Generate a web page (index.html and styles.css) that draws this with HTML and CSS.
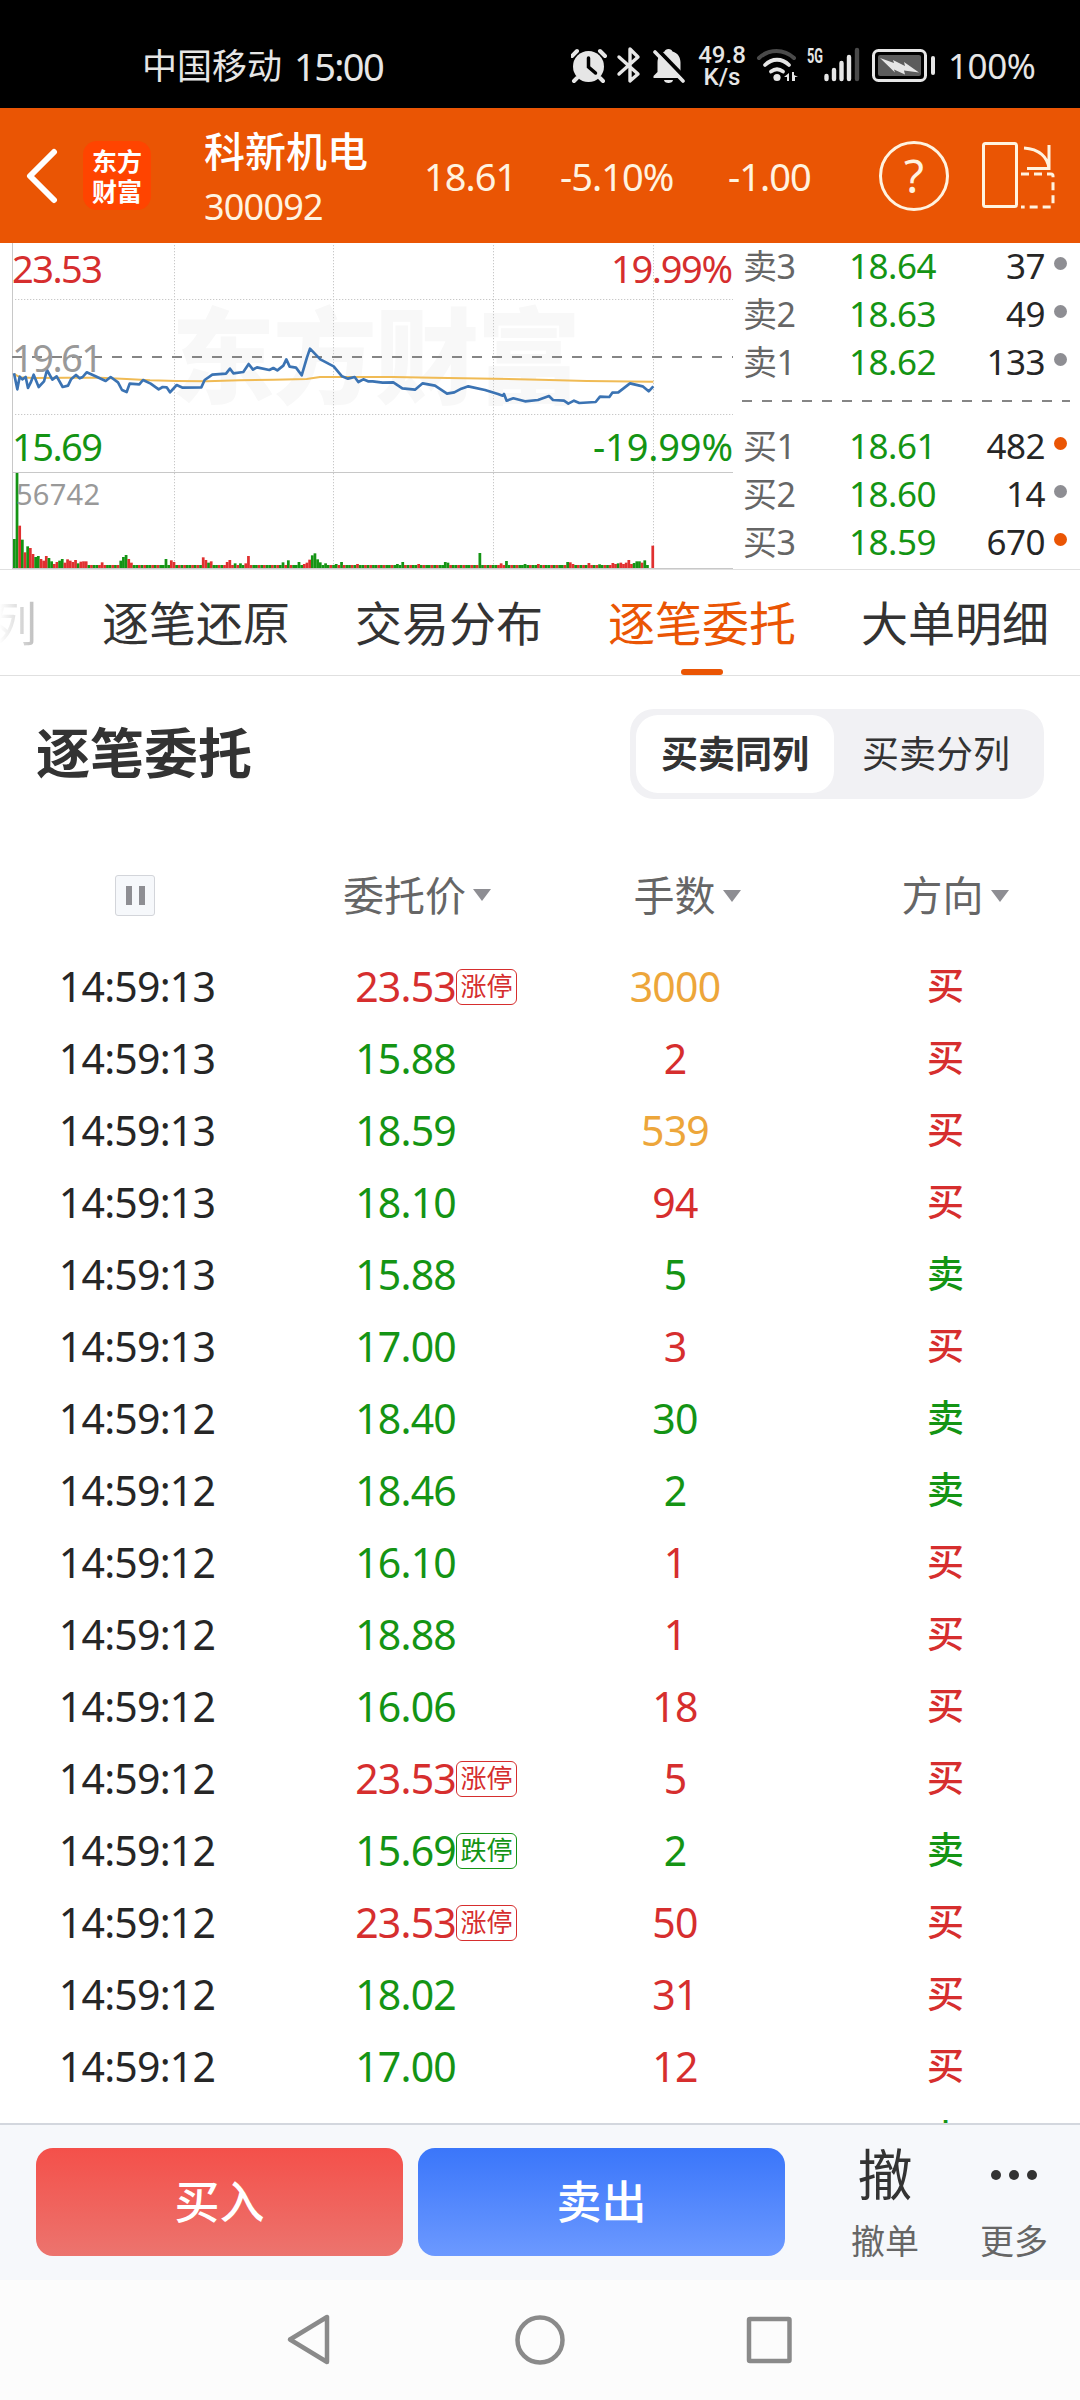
FILE: index.html
```html
<!DOCTYPE html>
<html lang="zh-CN">
<head>
    <meta charset="UTF-8">
    <meta name="viewport" content="width=device-width, initial-scale=1.0">
    <title>科新机电 300092</title>
    <link rel="stylesheet" href="styles.css">
</head>
<body>
    <div class="status-bar">
        <span class="carrier">中国移动</span>
        <span class="clock">15:00</span>
        <svg class="status-icons" width="114" height="40" viewBox="571 46 114 40">
            <!-- 闹钟 -->
            <circle cx="588.500" cy="66.500" r="15.500" fill="#e6e6e6"/>
            <path d="M572 56l5-5M605 56l-5-5M577 78l-3 3M600 78l3 3" stroke="#e6e6e6" stroke-width="4" stroke-linecap="round"/>
            <path d="M588.500 58v9l7 6" stroke="#000" stroke-width="3.500" fill="none" stroke-linecap="round"/>
            <!-- 蓝牙 -->
            <path d="M619 57l19 17-8 7V49l8 8-19 17" stroke="#e6e6e6" stroke-width="3.400" fill="none" stroke-linejoin="round" stroke-linecap="round"/>
            <!-- 静音 -->
            <path d="M668.500 49c2 0 3.500 1 4 2.500 5.500 1.500 8 6 8 11V72l3 4v2h-30v-2l4-4v-9.500c0-5 2.500-9.500 7-11 .5-1.500 2-2.500 4-2.500zM664 80h9c0 4-9 4-9 0z" fill="#e6e6e6"/>
            <path d="M656 48l30 31" stroke="#000" stroke-width="4"/>
            <path d="M655 52l28 29" stroke="#e6e6e6" stroke-width="3.600" stroke-linecap="round"/>
        </svg>
        <div class="speed"><span>49.8</span><span>K/s</span></div>
        <svg class="signal" width="105" height="40" viewBox="756 46 105 40">
            <path d="M759 58c10-9.500 25-9.500 35 0" stroke="#4a4a4a" stroke-width="4" fill="none" stroke-linecap="round"/>
            <path d="M765 65c7-7 17-7 24 0M771 71.500c4-3 8-3 12 0" stroke="#e6e6e6" stroke-width="3.800" fill="none" stroke-linecap="round"/>
            <circle cx="777" cy="77.500" r="3.600" fill="#e6e6e6"/>
            <path d="M784 77l5-4v8h-2v-4zM798 77h-3v4h-3v-9h2v3z" fill="#e6e6e6"/>
            <text class="net" x="807" y="63" textLength="16" lengthAdjust="spacingAndGlyphs">5G</text>
            <path d="M826.500 76v3M834 70v9M841.500 63v16M849 57v22" stroke="#e6e6e6" stroke-width="4.400" stroke-linecap="round"/>
            <path d="M857 50v29" stroke="#4a4a4a" stroke-width="4.400" stroke-linecap="round"/>
        </svg>
        <svg class="battery" width="64" height="34" viewBox="872 49 64 34">
            <rect x="873.500" y="50.500" width="52" height="30" rx="5" fill="none" stroke="#e6e6e6" stroke-width="3"/>
            <rect x="878" y="55" width="43" height="21" rx="2" fill="#5c5c5c"/>
            <path d="M880 58l14 5-1-3 12 6-1-4 15 10.500-15-2 1 4-11-5 1 3z" fill="#e6e6e6"/>
            <path d="M933 58v15" stroke="#e6e6e6" stroke-width="4" stroke-linecap="round"/>
        </svg>
        <span class="percent">100%</span>
    </div>

    <div class="header">
        <svg class="back" width="34" height="56" viewBox="0 0 34 56"><path d="M29 4L5 28l24 24" fill="none" stroke="#fff" stroke-width="6" stroke-linecap="round" stroke-linejoin="round"/></svg>
        <div class="logo"><span>东方</span><span>财富</span></div>
        <div class="stock">
            <h1>科新机电</h1>
            <span>300092</span>
        </div>
        <span class="quote price-now">18.61</span>
        <span class="quote rate">-5.10%</span>
        <span class="quote change">-1.00</span>
        <div class="help">?</div>
        <svg class="rotate" width="74" height="70" viewBox="981 141 74 70" fill="none" stroke="#fff3e0" stroke-width="3">
            <rect x="983.500" y="143.500" width="33" height="63" rx="2"/>
            <path d="M1024 148c15 1 24 9 25 21M1049 145v23.500h-22"/>
            <path d="M1021 174h30q2 0 2 2v29q0 2-2 2h-30" stroke-dasharray="8 5"/>
        </svg>
    </div>

    <div class="market">
        <svg class="chart" width="735" height="326" viewBox="0 243 735 326">
            <text class="watermark" x="171" y="396" textLength="410">东方财富</text>
            <g stroke="#c8c8c8" stroke-dasharray="1.300 1.700">
                <path d="M174.500 245v323M333.500 245v323M493.500 245v323M653.500 245v323M15 299.500h718M15 414.500h718"/>
            </g>
            <path d="M12.500 243v326M12 472.500h721M12 568.500h721" stroke="#c8c8c8" fill="none"/>
            <path d="M12 357h721" stroke="#858585" stroke-width="2" stroke-dasharray="10 10"/>
            <g transform="translate(0 240) scale(.33333)" fill="none" stroke-linejoin="round">
                <polyline class="avg" points="42,402 60,412 100,414 200,413 300,413 380,417 450,421 530,423 620,424 720,421 820,419 920,417 960,411 1080,411 1180,411 1300,413 1480,416 1620,419 1760,423 1960,425"/>
                <polyline class="line" points="42,400 52,448 59,410 67,418 77,411 84,444 92,428 101,404 116,441 132,424 141,390 157,419 170,409 188,441 204,437 213,418 228,405 239,415 248,411 260,397 285,408 317,423 332,411 354,427 366,450 380,456 389,431 418,433 429,420 452,431 476,448 488,441 500,442 510,457 530,435 548,443 604,442 614,420 637,404 678,401 690,386 700,400 730,396 746,372 759,389 771,382 808,390 820,384 832,391 850,377 859,358 869,380 888,383 905,406 921,352 930,326 961,358 1001,379 1026,409 1044,416 1064,411 1075,426 1090,418 1104,424 1118,424 1148,428 1180,427 1207,445 1245,449 1268,430 1305,437 1341,461 1363,457 1384,446 1405,439 1455,450 1494,462 1508,467 1512,462 1520,482 1540,475 1575,484 1614,480 1647,468 1659,480 1692,482 1705,491 1722,482 1738,489 1787,486 1800,470 1828,471 1837,458 1855,457 1890,430 1928,439 1946,454 1960,439"/>
            </g>
            <g id="volume" transform="translate(0 240) scale(.33333)"></g>
            <text class="up" x="12" y="283" textLength="91">23.53</text>
            <text class="base" x="12" y="372" textLength="91">19.61</text>
            <text class="down" x="12" y="461" textLength="91">15.69</text>
            <text class="vol" x="16" y="505" textLength="84">56742</text>
            <text class="up" x="611" y="283" textLength="122">19.99%</text>
            <text class="down" x="593" y="461" textLength="140">-19.99%</text>
        </svg>
        <div class="book">
            <div class="level"><span>卖3</span><b>18.64</b><em>37</em><i></i></div>
            <div class="level"><span>卖2</span><b>18.63</b><em>49</em><i></i></div>
            <div class="level"><span>卖1</span><b>18.62</b><em>133</em><i></i></div>
            <div class="split"></div>
            <div class="level"><span>买1</span><b>18.61</b><em>482</em><i class="big"></i></div>
            <div class="level"><span>买2</span><b>18.60</b><em>14</em><i></i></div>
            <div class="level"><span>买3</span><b>18.59</b><em>670</em><i class="big"></i></div>
        </div>
    </div>

    <div class="tabs">
        <span class="faded">列</span>
        <span>逐笔还原</span>
        <span>交易分布</span>
        <span class="active">逐笔委托</span>
        <span>大单明细</span>
    </div>

    <div class="section-head">
        <h2>逐笔委托</h2>
        <div class="switch">
            <span class="active">买卖同列</span>
            <span>买卖分列</span>
        </div>
    </div>

    <div class="orders">
        <div class="row row-head">
            <div class="time"><span class="pause"></span></div>
            <div class="price">委托价<i class="arrow"></i></div>
            <div class="lots">手数<i class="arrow"></i></div>
            <div class="side">方向<i class="arrow"></i></div>
        </div>
        <div id="rows"></div>
    </div>

    <div class="trade-bar">
        <div class="btn buy">买入</div>
        <div class="btn sell">卖出</div>
        <div class="tool cancel"><strong>撤</strong><span>撤单</span></div>
        <div class="tool"><div class="dots"><i></i><i></i><i></i></div><span>更多</span></div>
    </div>

    <div class="nav-bar">
        <svg width="508" height="56" viewBox="286 2312 508 56" fill="none" stroke="#8a8a8a" stroke-width="4.500" stroke-linejoin="round">
            <path d="M327 2317v45l-37-22.500z"/>
            <circle cx="540" cy="2340" r="22.500"/>
            <rect x="749" y="2319" width="40.500" height="42" rx="1"/>
        </svg>
    </div>

    <script>
        // 时间, 价格, 手数, 手数颜色, 方向
        const orders = [
            ['14:59:13', '23.53', 3000, 'gold', '买'],
            ['14:59:13', '15.88', 2, 'red', '买'],
            ['14:59:13', '18.59', 539, 'gold', '买'],
            ['14:59:13', '18.10', 94, 'red', '买'],
            ['14:59:13', '15.88', 5, 'green', '卖'],
            ['14:59:13', '17.00', 3, 'red', '买'],
            ['14:59:12', '18.40', 30, 'green', '卖'],
            ['14:59:12', '18.46', 2, 'green', '卖'],
            ['14:59:12', '16.10', 1, 'red', '买'],
            ['14:59:12', '18.88', 1, 'red', '买'],
            ['14:59:12', '16.06', 18, 'red', '买'],
            ['14:59:12', '23.53', 5, 'red', '买'],
            ['14:59:12', '15.69', 2, 'green', '卖'],
            ['14:59:12', '23.53', 50, 'red', '买'],
            ['14:59:12', '18.02', 31, 'red', '买'],
            ['14:59:12', '17.00', 12, 'red', '买'],
            ['', '', '', 'green', '卖']
        ];
        const limits = { '23.53': '涨停', '15.69': '跌停' };

        document.getElementById('rows').innerHTML = orders.map(([time, price, lots, color, side]) => {
            const tag = limits[price] ? `<span class="tag">${limits[price]}</span>` : '';
            return `<div class="row">
                <div class="time">${time}</div>
                <div class="price ${price === '23.53' ? 'red' : 'green'}"><span class="num">${price}</span>${tag}</div>
                <div class="lots ${color}">${lots}</div>
                <div class="side ${side === '买' ? 'red' : 'green'}">${side}</div>
            </div>`;
        }).join('');

        // 成交量：每分钟一根，未列出的按最低高度画
        const peaks = {
            0: '87g', 1: '285g', 2: '127r', 3: '85g', 4: '47r', 5: '65g', 6: '60r', 7: '42r', 8: '33g', 9: '36g',
            10: '27r', 11: '22r', 12: '36r', 13: '30g', 14: '20g', 15: '12r', 16: '18r', 17: '22g', 18: '27g', 19: '16r',
            20: '26r', 21: '22r', 22: '18r', 23: '24r', 24: '14g', 25: '19r', 26: '20r', 27: '20r', 33: '17r',
            40: '22g', 41: '33g', 42: '39g', 43: '27r', 44: '16r', 57: '27g', 59: '23r', 60: '18r',
            71: '32r', 72: '24r', 73: '16g', 74: '20r', 80: '18r', 81: '24r', 83: '14g', 85: '14g', 87: '14r', 88: '36r',
            101: '17g', 103: '23g', 107: '18g', 109: '12r', 110: '16r', 111: '25r', 112: '38g', 113: '44g', 114: '26g', 115: '17g', 117: '14g',
            121: '12g', 123: '18g', 129: '12r', 144: '12g', 146: '18g', 152: '12r', 162: '18g', 163: '16g', 175: '45g', 183: '14r', 185: '21g',
            192: '12g', 197: '12r', 208: '18g', 209: '17r', 210: '12r', 216: '15r', 220: '11g', 225: '15r', 226: '12r', 227: '14g', 228: '16r',
            229: '12r', 230: '16r', 231: '24r', 232: '12r', 233: '15g', 234: '20g', 235: '20g', 236: '16r', 237: '23g', 238: '9g', 239: '0g', 240: '67r'
        };
        let bars = '';
        for (let i = 0; i <= 240; i++) {
            const bar = peaks[i] || (i * 7 % 5 < 3 ? '9g' : '9r');
            const h = parseInt(bar);
            const color = bar.endsWith('r') ? '#e03030' : '#149414';
            bars += `<rect x="${39 + i * 7.98}" y="${984 - h}" width="8.2" height="${h}" fill="${color}"/>`;
        }
        document.getElementById('volume').innerHTML = bars;
    </script>
</body>
</html>
```
FILE: styles.css
```css
* {
    box-sizing: border-box;
}
body {
    margin: 0;
    width: 1080px;
    height: 2400px;
    overflow: hidden;
    display: flex;
    flex-direction: column;
    background: #fff;
    color: #333;
    font-family: "Noto Sans", "Noto Sans CJK SC", sans-serif;
}
h1, h2 {
    margin: 0;
}
i, em {
    font-style: normal;
}
.red {
    color: #d62e2e;
}
.green {
    color: #149414;
}
.gold {
    color: #eda63a;
}

/* 状态栏 */
.status-bar {
    height: 108px;
    flex: none;
    background: #000;
    color: #e6e6e6;
    display: flex;
    align-items: center;
    padding: 24px 0 0 142px;
    white-space: nowrap;
}
.carrier {
    width: 152px;
    font-size: 35px;
    line-height: 40px;
}
.clock {
    width: 277px;
    font-size: 38px;
    letter-spacing: -1.6px;
    line-height: 38px;
}
.speed {
    width: 50px;
    margin: 0 9px 0 12px;
    display: flex;
    flex-direction: column;
    text-align: center;
    font-family: Roboto, sans-serif;
    font-size: 24px;
    font-weight: 500;
    line-height: 22px;
}
.net {
    font: bold 20px Roboto, sans-serif;
    fill: #e6e6e6;
}
.battery {
    margin-left: 11px;
}
.percent {
    margin-left: 12px;
    font-size: 35px;
    letter-spacing: -0.4px;
    line-height: 40px;
}

/* 顶部 */
.header {
    height: 135px;
    flex: none;
    background: #ea5504;
    color: #fff3e0;
    display: flex;
    align-items: center;
    padding-left: 25px;
    white-space: nowrap;
}
.logo {
    width: 68px;
    height: 69px;
    margin-left: 24px;
    border-radius: 14px;
    background: #ff4400;
    color: #fff;
    display: flex;
    flex-direction: column;
    justify-content: center;
    align-items: center;
    font-size: 25px;
    font-weight: 700;
    line-height: 30px;
}
.stock {
    width: 220px;
    margin-left: 53px;
    padding-top: 9px;
}
.stock h1 {
    color: #fff;
    font-size: 41px;
    font-weight: 500;
    line-height: 54px;
}
.stock span {
    display: block;
    font-size: 36px;
    letter-spacing: -0.8px;
    line-height: 58px;
}
.quote {
    font-size: 38px;
    letter-spacing: -1px;
    padding-top: 1px;
}
.price-now {
    width: 136px;
}
.rate {
    width: 168px;
}
.change {
    width: 151px;
}
.help {
    width: 70px;
    height: 70px;
    border: 3px solid #fff3e0;
    border-radius: 50%;
    text-align: center;
    font-size: 46px;
    line-height: 62px;
}
.rotate {
    margin-left: 32px;
}

/* 分时图 + 五档 */
.market {
    height: 327px;
    flex: none;
    display: flex;
    border-bottom: 1px solid #e0e0e0;
}
.chart {
    flex: none;
    display: block;
}
.chart text {
    font-size: 38px;
}
.chart .watermark {
    font-family: "Noto Sans CJK SC", sans-serif;
    font-size: 104px;
    font-weight: 900;
    fill: #f8f8f8;
}
.chart .up {
    fill: #d62e2e;
}
.chart .down {
    fill: #149414;
}
.chart .base {
    fill: #999;
}
.chart .vol {
    font-size: 29px;
    fill: #999;
}
.line {
    stroke: #3b73b3;
    stroke-width: 8;
}
.avg {
    stroke: #f0bb55;
    stroke-width: 6;
}
.book {
    flex: 1;
    padding: 0 13px 0 8px;
}
.level {
    height: 48px;
    display: flex;
    align-items: center;
    font-size: 35px;
    line-height: 44px;
    letter-spacing: -0.5px;
    padding-bottom: 2px;
}
.level span {
    width: 106px;
    color: #666;
    font-size: 34px;
}
.level b {
    width: 92px;
    font-weight: 400;
    color: #149414;
}
.level em {
    flex: 1;
    text-align: right;
    color: #262626;
}
.level i {
    width: 13px;
    height: 13px;
    margin: 0 0 5px 9px;
    border-radius: 50%;
    background: #8e8e93;
}
.level .big {
    background: #ea5504;
}
.split {
    height: 36px;
    margin: 0 -3px 0 -1px;
    background: repeating-linear-gradient(90deg, #858585 0 10px, transparent 10px 20px) 0 13px / 100% 2px no-repeat;
}

/* 标签页 */
.tabs {
    height: 106px;
    flex: none;
    border-bottom: 1px solid #e0e0e0;
    display: flex;
    gap: 65px;
    margin-left: -10px;
    font-size: 47px;
    line-height: 106px;
    white-space: nowrap;
}
.tabs span {
    position: relative;
    flex: none;
}
.tabs .faded {
    color: transparent;
    background: linear-gradient(90deg, #fff 20%, #bbb);
    background-clip: text;
    -webkit-background-clip: text;
}
.tabs .active {
    color: #ea5504;
}
.tabs .active::after {
    content: "";
    position: absolute;
    left: 73px;
    bottom: 0;
    width: 42px;
    height: 6px;
    border-radius: 3px;
    background: #ea5504;
}

/* 标题与切换 */
.section-head {
    height: 158px;
    flex: none;
    display: flex;
    justify-content: space-between;
    align-items: center;
    padding: 0 36px 2px;
}
.section-head h2 {
    font-size: 54px;
    font-weight: 700;
    line-height: 64px;
    padding-bottom: 3px;
}
.switch {
    width: 414px;
    height: 90px;
    padding: 6px;
    border-radius: 24px;
    background: #f1f1f4;
    display: flex;
    font-size: 37px;
    line-height: 78px;
    text-align: center;
}
.switch span {
    flex: 1;
}
.switch .active {
    flex: none;
    width: 198px;
    border-radius: 22px;
    background: #fff;
    font-weight: 700;
}

/* 委托明细 */
.orders {
    height: 1289px;
    flex: none;
    overflow: hidden;
    padding-top: 8px;
}
.row {
    height: 72px;
    display: grid;
    grid-template-columns: 270px 270px 270px 270px;
    align-items: center;
    padding-bottom: 2px;
    font-size: 41px;
    letter-spacing: -0.8px;
    line-height: 56px;
    white-space: nowrap;
}
.row-head {
    height: 109px;
    padding-bottom: 4px;
    color: #666;
    letter-spacing: 0;
}
.time {
    color: #262626;
    text-align: center;
    padding-left: 4px;
}
.pause {
    display: block;
    width: 40px;
    height: 41px;
    margin: 2px 0 0 111px;
    border: 1px solid #d3d5da;
    border-radius: 3px;
    background: linear-gradient(#8e8e93, #8e8e93) 10px 10px / 6px 19px no-repeat,
        linear-gradient(#8e8e93, #8e8e93) 23px 10px / 6px 19px no-repeat, #f6f8fb;
}
.price {
    display: flex;
    align-items: center;
}
.row-head .price {
    padding-left: 73px;
}
.num {
    width: 186px;
    text-align: right;
}
.tag {
    width: 61px;
    height: 36px;
    margin-top: 2px;
    border: 1px solid currentColor;
    border-radius: 6px;
    text-align: center;
    font-size: 26px;
    line-height: 33px;
    letter-spacing: 0;
}
.lots, .side {
    text-align: center;
}
.side {
    font-size: 37px;
    font-weight: 500;
}
.row-head .side {
    font-size: 41px;
    font-weight: 400;
    padding-left: 20px;
}
.row-head .lots {
    padding-left: 24px;
}
.arrow {
    display: inline-block;
    margin-left: 7px;
    border: 9px solid transparent;
    border-top: 12px solid #8e8e93;
    border-bottom: 0;
    vertical-align: 9px;
}

/* 底部 */
.trade-bar {
    height: 157px;
    flex: none;
    border-top: 2px solid #d3d7de;
    background: #f6f8fb;
    display: flex;
    padding: 23px 0 0 36px;
}
.btn {
    width: 367px;
    height: 108px;
    margin-right: 15px;
    border-radius: 17px;
    color: #fff;
    font-size: 45px;
    font-weight: 500;
    line-height: 108px;
    text-align: center;
}
.buy {
    background: linear-gradient(#f4504a, #ec746e);
}
.sell {
    background: linear-gradient(#3a76fa, #6c99ff);
}
.tool {
    width: 80px;
    display: flex;
    flex-direction: column;
    align-items: center;
    color: #666;
    font-size: 34px;
    line-height: 38px;
    white-space: nowrap;
}
.cancel {
    margin: 0 49px 0 45px;
}
.tool strong {
    height: 74px;
    color: #333;
    font-size: 55px;
    font-weight: 400;
    line-height: 52px;
}
.dots {
    height: 74px;
    padding-top: 22px;
    display: flex;
    gap: 8px;
}
.dots i {
    width: 10px;
    height: 10px;
    border-radius: 50%;
    background: #333;
}
.nav-bar {
    height: 120px;
    flex: none;
    background: #fcfcfc;
    padding: 32px 0 0 286px;
}
```
